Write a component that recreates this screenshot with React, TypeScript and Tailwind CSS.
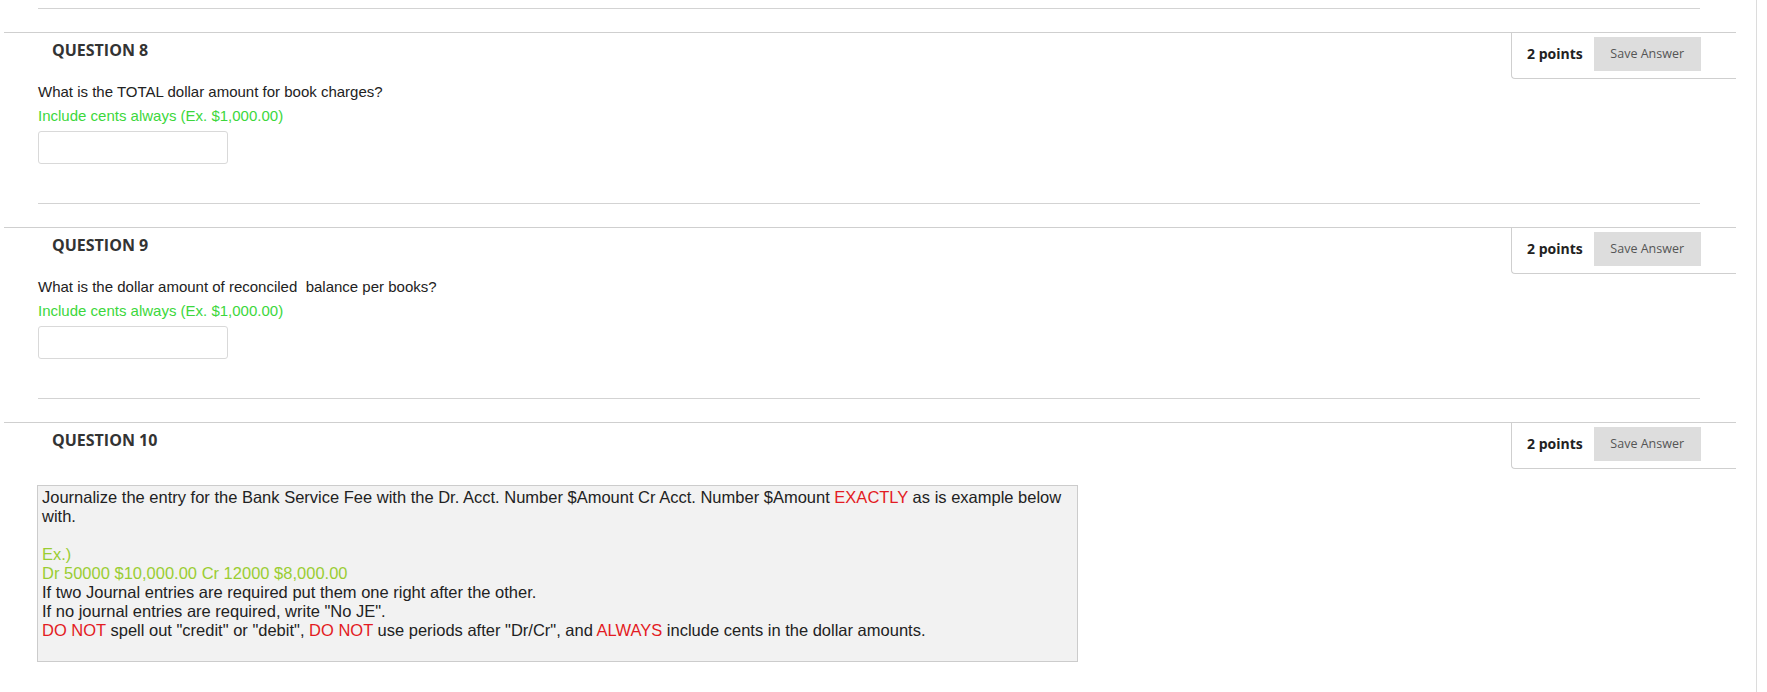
import React from "react";

const body = "font-['Liberation_Sans',Arial,sans-serif]";
const open = "font-['Open_Sans','Noto_Sans',sans-serif]";

function Red({ children }: { children: React.ReactNode }) {
  return <span className="text-[#e31b23]">{children}</span>;
}

function Question({ label, children }: { label: string; children: React.ReactNode }) {
  return (
    <section className="mt-[23px] ml-[4px] w-[1732px] border-t border-[#cfcfcf]">
      <div className="flex justify-between items-start h-[46px]">
        <h3 className={`${open} pl-[48px] pt-[5px] text-[16px] leading-[24px] font-bold text-[#333]`}>{label}</h3>
        <div className="flex items-start h-[46px] w-[225px] border-l border-b border-[#cfcfcf] rounded-bl-[4px] pl-[15px] pt-[4px]">
          <span className={`${open} h-[33px] flex items-center text-[14px] font-bold text-[#222]`}>2 points</span>
          <button className={`${open} ml-[11px] w-[107px] h-[34px] bg-[#dddddd] text-[12.5px] text-[#555]`}>Save Answer</button>
        </div>
      </div>
      <div className="pl-[34px]">{children}</div>
    </section>
  );
}

function Hr() {
  return <div className="w-[1662px] border-t border-[#d3d3d3]" />;
}

function Simple({ text }: { text: string }) {
  return (
    <div className={`${body} text-[15px]`}>
      <p className="mt-[4px] leading-[18px] text-[#222]">{text}</p>
      <p className="mt-[6px] leading-[18px] text-[#3cd73c]">Include cents always (Ex. $1,000.00)</p>
      <input type="text" className="mt-[6px] block w-[190px] h-[33px] border border-[#d9d9d9] rounded-[3px] bg-white" />
      <div className="mt-[39px]">
        <Hr />
      </div>
    </div>
  );
}

export default function App() {
  return (
    <div className="w-[1767px] h-[692px] overflow-hidden bg-white">
      <div className="w-[1757px] h-[692px] border-r border-[#dcdcdc] pt-[8px]">
        <div className="ml-[38px]">
          <Hr />
        </div>
        <Question label="QUESTION 8">
          <Simple text="What is the TOTAL dollar amount for book charges?" />
        </Question>
        <Question label="QUESTION 9">
          <Simple text={"What is the dollar amount of reconciled\u00a0 balance per books?"} />
        </Question>
        <Question label="QUESTION 10">
          <div className={`${body} mt-[16px] w-[1041px] -ml-[1px] border border-[#cccccc] bg-[#f2f2f2] px-[4px] py-[2px] text-[16.5px] leading-[19px] text-[#222]`}>
            <p>
              Journalize the entry for the Bank Service Fee with the Dr. Acct. Number $Amount Cr Acct. Number $Amount <Red>EXACTLY</Red> as is example below with.
            </p>
            <p className="h-[19px]"></p>
            <p className="text-[#9acd32]">Ex.)</p>
            <p className="text-[#9acd32]">Dr 50000 $10,000.00 Cr 12000 $8,000.00</p>
            <p>If two Journal entries are required put them one right after the other.</p>
            <p>If no journal entries are required, write "No JE".</p>
            <p>
              <Red>DO NOT</Red> spell out "credit" or "debit", <Red>DO NOT</Red> use periods after "Dr/Cr", and <Red>ALWAYS</Red> include cents in the dollar amounts.
            </p>
            <p className="h-[19px]"></p>
          </div>
        </Question>
      </div>
    </div>
  );
}
